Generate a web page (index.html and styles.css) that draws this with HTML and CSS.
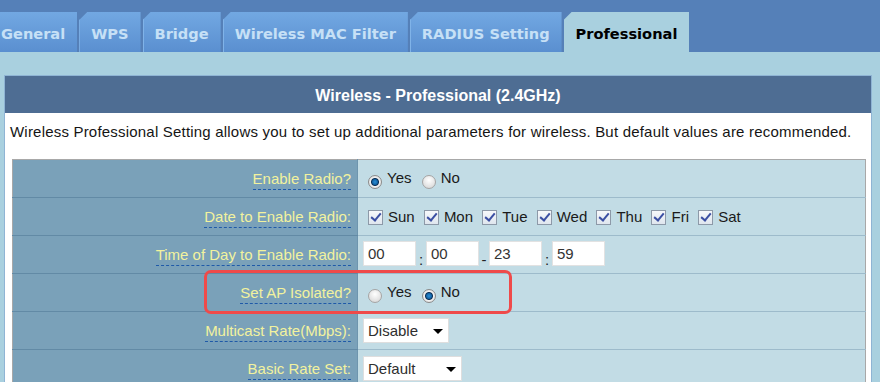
FILE: index.html
```html
<!DOCTYPE html>
<html lang="en">
<head>
    <meta charset="UTF-8">
    <meta name="viewport" content="width=device-width, initial-scale=1.0">
    <title>Wireless - Professional</title>
    <link rel="stylesheet" href="styles.css">
</head>
<body>

    <div class="topbar">
        <ul class="tabs">
            <li class="tab first">General</li>
            <li class="tab">WPS</li>
            <li class="tab">Bridge</li>
            <li class="tab">Wireless MAC Filter</li>
            <li class="tab">RADIUS Setting</li>
            <li class="tab active">Professional</li>
        </ul>
    </div>

    <div class="content">
        <div class="panel">
            <div class="panel-head">Wireless - Professional (2.4GHz)</div>
            <div class="panel-body">
                <p class="desc">Wireless Professional Setting allows you to set up additional parameters for wireless. But default values are recommended.</p>

                <div class="table-wrap">
                    <table class="form-table">
                        <tr>
                            <th><a class="hint">Enable Radio?</a></th>
                            <td>
                                <input type="radio" class="radio" name="radio_on" checked><span class="opt">Yes</span>
                                <input type="radio" class="radio" name="radio_on"><span class="opt">No</span>
                            </td>
                        </tr>
                        <tr>
                            <th><a class="hint">Date to Enable Radio:</a></th>
                            <td>
                                <input type="checkbox" class="check" checked><span class="day">Sun</span>
                                <input type="checkbox" class="check" checked><span class="day">Mon</span>
                                <input type="checkbox" class="check" checked><span class="day">Tue</span>
                                <input type="checkbox" class="check" checked><span class="day">Wed</span>
                                <input type="checkbox" class="check" checked><span class="day">Thu</span>
                                <input type="checkbox" class="check" checked><span class="day">Fri</span>
                                <input type="checkbox" class="check" checked><span class="day">Sat</span>
                            </td>
                        </tr>
                        <tr>
                            <th><a class="hint">Time of Day to Enable Radio:</a></th>
                            <td>
                                <input type="text" class="time" value="00"><span class="sep">:</span><input type="text" class="time" value="00"><span class="sep">-</span><input type="text" class="time" value="23"><span class="sep">:</span><input type="text" class="time" value="59">
                            </td>
                        </tr>
                        <tr>
                            <th><a class="hint">Set AP Isolated?</a></th>
                            <td>
                                <input type="radio" class="radio" name="ap_isolate"><span class="opt">Yes</span>
                                <input type="radio" class="radio" name="ap_isolate" checked><span class="opt">No</span>
                            </td>
                        </tr>
                        <tr>
                            <th><a class="hint">Multicast Rate(Mbps):</a></th>
                            <td>
                                <span class="select-wrap">
                                    <select class="select sel-mcast">
                                        <option>Disable</option>
                                    </select>
                                </span>
                            </td>
                        </tr>
                        <tr>
                            <th><a class="hint">Basic Rate Set:</a></th>
                            <td>
                                <span class="select-wrap">
                                    <select class="select sel-rate">
                                        <option>Default</option>
                                    </select>
                                </span>
                            </td>
                        </tr>
                    </table>

                    <div class="highlight"></div>
                </div>
            </div>
        </div>
    </div>

</body>
</html>
```

FILE: styles.css
```css
/* Page */
body {
    margin: 0;
    background-color: #a9d0df;
    font-family: 'Liberation Sans', Arial, sans-serif;
    font-size: 15px;
    color: #1a1a1a;
    overflow: hidden;
}

/* Tab bar */
.topbar {
    background-color: #5580b8;
    height: 52px;
    padding-top: 12px;
    box-sizing: border-box;
    overflow: hidden;
}
.tabs {
    list-style: none;
    margin: 0;
    padding: 0;
    display: flex;
    gap: 2px;
    height: 40px;
}
.tab {
    padding: 0 12px;
    line-height: 44px;
    font-family: 'DejaVu Sans', Verdana, sans-serif;
    font-weight: bold;
    font-size: 14.6px;
    color: #c6e0f6;
    background: linear-gradient(#72a8e2, #5a8fd0);
    box-shadow: inset 1px 0 0 #80b3e8;
    clip-path: polygon(8px 0, 100% 0, 100% 100%, 0 100%, 0 8px);
    white-space: nowrap;
}
.tab.first {
    margin-left: -11px;
}
.tab.active {
    background: #a9d0df;
    color: #000;
    box-shadow: none;
}

/* Panel */
.content {
    padding: 23px 8px 0 4px;
}
.panel {
    width: 868px;
    border: 1px solid #8fb4d4;
    border-bottom: none;
    background-color: #fff;
    box-sizing: border-box;
}
.panel-head {
    background-color: #4e6d93;
    color: #fff;
    font-weight: bold;
    font-size: 16px;
    text-align: center;
    height: 37px;
    line-height: 40px;
}
.panel-body {
    padding: 10px 5px 0 5px;
}
.desc {
    margin: 0 0 19px;
    line-height: 17px;
    letter-spacing: 0.2px;
    color: #151515;
}

/* Form table */
.table-wrap {
    position: relative;
    margin-left: 2px;
    width: 854px;
}
.form-table {
    width: 100%;
    border-collapse: collapse;
    border: 1px solid #a8a8a8;
}
.form-table th {
    width: 338px;
    height: 37px;
    padding: 0 6px 0 0;
    text-align: right;
    font-weight: normal;
    background-color: #7aa1b9;
    border-bottom: 1px solid #628aa5;
    border-right: 1px solid #6e95ae;
}
.form-table td {
    height: 37px;
    padding: 0 0 0 5px;
    background-color: #c2dce5;
    border-bottom: 1px solid #9dbbcb;
    white-space: nowrap;
}
.hint {
    color: #f2f29e;
    border-bottom: 1px dashed #1f5aa8;
    padding-bottom: 2px;
}

/* Radios */
.radio {
    appearance: none;
    -webkit-appearance: none;
    width: 14px;
    height: 14px;
    margin: 0 5px 0 5px;
    border: 1px solid #a4a4a4;
    border-radius: 50%;
    background: radial-gradient(circle at 50% 35%, #ffffff, #d2d2d2);
    vertical-align: -6px;
    box-sizing: border-box;
}
.radio:checked {
    border-color: #8a8a8a;
    background: radial-gradient(circle at 50% 50%, #2d8fd6 0, #1466a8 2.5px, #0b2f55 3.5px, #f2f2f2 4.5px, #cfcfcf 100%);
}
.opt {
    margin-right: 1px;
}

/* Checkboxes */
.check {
    appearance: none;
    -webkit-appearance: none;
    position: relative;
    width: 15px;
    height: 15px;
    margin: 0 5px 0 5px;
    border: 1px solid #8d99a8;
    background: linear-gradient(#f6f8fb, #dfe6ee);
    vertical-align: -3px;
    box-sizing: border-box;
}
.check:checked::after {
    content: '';
    position: absolute;
    left: 4px;
    top: 0px;
    width: 4px;
    height: 8px;
    border: solid #3b4fa3;
    border-width: 0 2px 2px 0;
    transform: rotate(40deg);
}
.day {
    margin-right: 0;
}

/* Time fields */
.time {
    width: 53px;
    height: 25px;
    box-sizing: border-box;
    border: 1px solid #e2e2e2;
    background-color: #fff;
    padding: 0 0 0 4px;
    font-family: 'Liberation Sans', Arial, sans-serif;
    font-size: 15px;
    color: #333;
    vertical-align: middle;
}
.sep {
    display: inline-block;
    width: 10px;
    text-align: center;
    vertical-align: -8px;
    color: #222;
}

/* Selects */
.select-wrap {
    position: relative;
    display: inline-block;
    vertical-align: middle;
}
.select-wrap::after {
    content: '';
    position: absolute;
    right: 6px;
    top: 11px;
    border-left: 5px solid transparent;
    border-right: 5px solid transparent;
    border-top: 5px solid #000;
    pointer-events: none;
}
.select {
    appearance: none;
    -webkit-appearance: none;
    height: 25px;
    border: 1px solid #dedede;
    border-radius: 0;
    background-color: #fff;
    padding: 0 0 0 4px;
    font-family: 'Liberation Sans', Arial, sans-serif;
    font-size: 15px;
    color: #2e2e2e;
}
.sel-mcast {
    width: 86px;
}
.sel-rate {
    width: 99px;
}

/* Red highlight around AP isolation row */
.highlight {
    position: absolute;
    left: 192px;
    top: 111px;
    width: 308px;
    height: 44px;
    border: 3px solid #ef4a4a;
    border-radius: 7px;
    box-sizing: border-box;
}
```
